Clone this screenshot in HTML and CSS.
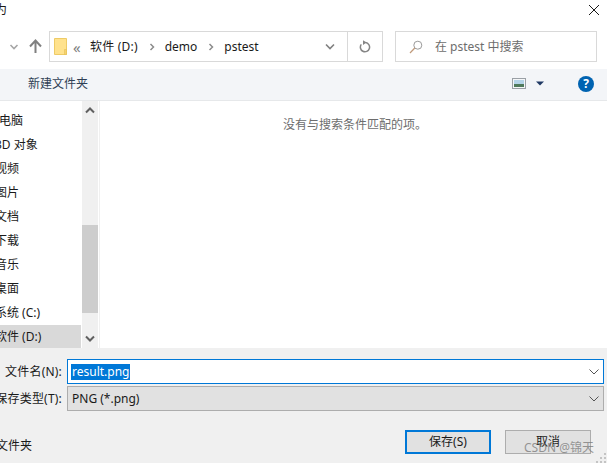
FILE: index.html
```html
<!DOCTYPE html>
<html lang="zh">
<head>
<meta charset="utf-8">
<title>另存为</title>
<link rel="stylesheet" href="styles.css">
</head>
<body>
<div class="dialog">
  <header class="titlebar">
    <span class="title">另存为</span>
    <svg class="close" width="12" height="12" viewBox="0 0 12 12"><path d="M1 1 L11 11 M11 1 L1 11" stroke="#1a1a1a" stroke-width="1" fill="none"/></svg>
  </header>
  <div class="navbar">
    <svg class="back" width="10" height="8" viewBox="0 0 10 8"><path d="M1.5 2 L5 5.5 L8.5 2" stroke="#a6a6a6" stroke-width="1.6" fill="none"/></svg>
    <svg class="up" width="13" height="14" viewBox="0 0 13 14"><path d="M6.5 14 V2 M1 7.5 L6.5 1.5 L12 7.5" stroke="#808080" stroke-width="2" fill="none"/></svg>
    <div class="address">
      <svg class="folder" width="13" height="17" viewBox="0 0 13 17"><path d="M.5 .5 H12.5 V16.5 H.5 Z" fill="#ffe28d" stroke="#eecb66"/><path d="M10.5 11.5 H12.5 V16.5 H10.5 Z" fill="#f5d36f" stroke="#e6bf55" stroke-width=".6"/></svg>
      <span class="crumb-more">«</span>
      <span class="crumb crumb-first">软件 (D:)</span>
      <svg class="sep" width="6" height="8" viewBox="0 0 6 8"><path d="M1.5 1 L4.5 4 L1.5 7" stroke="#8c8c8c" stroke-width="1.5" fill="none"/></svg>
      <span class="crumb">demo</span>
      <svg class="sep" width="6" height="8" viewBox="0 0 6 8"><path d="M1.5 1 L4.5 4 L1.5 7" stroke="#8c8c8c" stroke-width="1.5" fill="none"/></svg>
      <span class="crumb">pstest</span>
      <svg class="addr-drop" width="10" height="7" viewBox="0 0 10 7"><path d="M1 1.5 L5 5.5 L9 1.5" stroke="#808080" stroke-width="1.6" fill="none"/></svg>
      <div class="refresh">
        <svg width="12" height="13" viewBox="0 0 12 13"><path d="M6.5 2.6 A4.6 4.6 0 1 1 2.3 4.4" stroke="#858585" stroke-width="1.5" fill="none"/><path d="M4 .3 L7.5 2.6 L4 4.9 Z" fill="#858585"/></svg>
      </div>
    </div>
    <div class="search">
      <svg class="lens" width="14" height="14" viewBox="0 0 14 14"><circle cx="8.8" cy="5.2" r="4" stroke="#9a9a9a" fill="none"/><path d="M5.8 8 L1 13" stroke="#c09a7a" stroke-width="1.2"/></svg>
      <span>在 pstest 中搜索</span>
    </div>
  </div>
  <div class="toolbar">
    <span class="new-folder">新建文件夹</span>
    <svg class="view" width="14" height="11" viewBox="0 0 14 11"><rect x=".5" y=".5" width="13" height="10" fill="#f4f6f8" stroke="#9aa0a6"/><rect x="2" y="2" width="10" height="4" fill="#b4d4e8"/><rect x="2" y="6" width="10" height="3" fill="#4f7a5c"/></svg>
    <svg class="view-drop" width="8" height="5" viewBox="0 0 8 5"><path d="M0 .5 H8 L4 4.5 Z" fill="#1f3864"/></svg>
    <span class="help">?</span>
  </div>
  <main class="browser">
    <nav class="tree">
      <ul class="tree-list">
        <li class="tree-item root"><span>此电脑</span></li>
        <li class="tree-item"><span>3D 对象</span></li>
        <li class="tree-item"><span>视频</span></li>
        <li class="tree-item"><span>图片</span></li>
        <li class="tree-item"><span>文档</span></li>
        <li class="tree-item"><span>下载</span></li>
        <li class="tree-item"><span>音乐</span></li>
        <li class="tree-item"><span>桌面</span></li>
        <li class="tree-item"><span>系统 (C:)</span></li>
        <li class="tree-item selected"><span>软件 (D:)</span></li>
      </ul>
      <div class="scrollbar">
        <svg class="arrow" width="10" height="7" viewBox="0 0 10 7"><path d="M1 5.5 L5 1.5 L9 5.5" stroke="#606060" stroke-width="2" fill="none"/></svg>
        <div class="track"><div class="thumb"></div></div>
        <svg class="arrow" width="10" height="7" viewBox="0 0 10 7"><path d="M1 1.5 L5 5.5 L9 1.5" stroke="#606060" stroke-width="2" fill="none"/></svg>
      </div>
    </nav>
    <section class="results">没有与搜索条件匹配的项。</section>
  </main>
  <form class="form">
    <div class="row">
      <label class="label">文件名(N):</label>
      <div class="input">
        <span class="selected-text">result.png</span>
        <svg class="drop" width="10" height="6" viewBox="0 0 10 6"><path d="M.5 .5 L5 5 L9.5 .5" stroke="#555" fill="none"/></svg>
      </div>
    </div>
    <div class="row">
      <label class="label">保存类型(T):</label>
      <div class="combo">
        <span>PNG (*.png)</span>
        <svg class="drop" width="10" height="6" viewBox="0 0 10 6"><path d="M.5 .5 L5 5 L9.5 .5" stroke="#555" fill="none"/></svg>
      </div>
    </div>
    <div class="actions">
      <span class="hide-folders">隐藏文件夹</span>
      <button type="button" class="btn primary">保存(S)</button>
      <button type="button" class="btn">取消</button>
    </div>
    <span class="watermark">CSDN @锦天</span>
    <svg class="grip" width="11" height="11" viewBox="0 0 11 11"><path d="M8 1h2v2H8zM4 5h2v2H4zM8 5h2v2H8zM0 9h2v2H0zM4 9h2v2H4zM8 9h2v2H8z" fill="#c4c4c4"/></svg>
  </form>
</div>
</body>
</html>
```

FILE: styles.css
```css
* { box-sizing: border-box; }
html, body { margin: 0; padding: 0; }
body {
  width: 607px;
  height: 463px;
  overflow: hidden;
  background: #fff;
  font-family: "Noto Sans", "Noto Sans CJK SC", sans-serif;
  font-size: 12px;
  line-height: 16px;
  color: #1a1a1a;
}
.dialog { position: relative; width: 607px; height: 463px; display: flex; flex-direction: column; overflow: hidden; }

.titlebar { height: 31px; display: flex; justify-content: space-between; align-items: flex-start; flex: none; }
.title { margin-left: -29px; margin-top: 2px; }
.close { margin: 4px 7px 0 0; }

.navbar { height: 38px; flex: none; display: flex; align-items: flex-start; }
.back { margin: 12px 0 0 9px; }
.up { margin: 8px 0 0 10px; }
.address {
  margin-left: 7px;
  width: 334px;
  height: 31px;
  border: 1px solid #d9d9d9;
  display: flex;
  align-items: center;
  padding-left: 4px;
}
.folder { flex: none; }
.crumb-more { margin-left: 6px; width: 16px; color: #808080; font-size: 15px; }
.crumb-first { margin-left: 1px; letter-spacing: .2px; }
.crumb { white-space: nowrap; }
.sep { margin: 0 10px 0 11px; flex: none; }
.addr-drop { margin-left: auto; margin-right: 6px; }
.refresh {
  width: 35px;
  height: 29px;
  border-left: 1px solid #d9d9d9;
  display: flex;
  align-items: center;
  justify-content: center;
  margin-left: 6px;
}
.search {
  margin-left: 12px;
  width: 202px;
  height: 31px;
  border: 1px solid #d9d9d9;
  display: flex;
  align-items: center;
  color: #6d6d6d;
  padding-left: 13px;
}
.lens { margin-right: 12px; flex: none; }

.toolbar {
  height: 32px;
  flex: none;
  background: #f3f5f8;
  border-bottom: 1px solid #e6e8ea;
  display: flex;
  align-items: center;
  padding: 0 13px 2px 28px;
  color: #2f3f55;
}
.view { margin-left: auto; }
.view-drop { margin-left: 10px; }
.help {
  margin-left: 34px;
  width: 16px;
  height: 16px;
  border-radius: 50%;
  background: #0063b1;
  color: #fff;
  font-weight: 700;
  font-size: 12px;
  line-height: 16px;
  text-align: center;
}

.browser { height: 247px; flex: none; display: flex; background: #fff; }
.tree { width: 100px; flex: none; display: flex; background: #fff; border-right: 1px solid #f0f0f0; }
.tree-list { list-style: none; margin: 0; padding: 8px 0 0; width: 82px; flex: none; overflow: hidden; }
.tree-item { height: 24px; width: 81px; display: flex; align-items: center; white-space: nowrap; overflow: hidden; }
.tree-item span { margin-left: -5px; }
.tree-item.root span { margin-left: -13px; }
.tree-item.selected { background: #d9d9d9; }
.scrollbar { width: 16px; flex: none; background: #f0f0f0; display: flex; flex-direction: column; align-items: center; }
.arrow { flex: none; margin: 6px 0; }
.track { flex: 1; width: 100%; padding-top: 105px; padding-bottom: 16px; }
.thumb { height: 100%; background: #cdcdcd; }
.results { flex: 1; text-align: center; padding-top: 16px; color: #6d6d6d; padding-left: 3px; }

.form { flex: 1; background: #f0f0f0; display: flex; flex-direction: column; padding-top: 11px; position: relative; }
.row { display: flex; align-items: center; height: 25px; margin-bottom: 2px; }
.label { width: 62px; flex: none; display: flex; justify-content: flex-end; white-space: nowrap; overflow: hidden; margin-right: 5px; letter-spacing: .2px; }
.input, .combo {
  width: 537px;
  height: 25px;
  display: flex;
  align-items: center;
  padding-left: 3px;
  padding-right: 4px;
}
.input { background: #fff; border: 1px solid #0078d7; }
.combo { background: #e1e1e1; border: 1px solid #adadad; padding-left: 4px; }
.selected-text { background: #0078d7; color: #fff; padding: 0 1px; }
.drop { margin-left: auto; }
.actions { display: flex; align-items: center; height: 24px; margin-top: 17px; }
.hide-folders { margin-left: -28px; margin-right: auto; padding-top: 8px; }
.btn {
  font: inherit;
  color: #1a1a1a;
  width: 86px;
  height: 24px;
  background: #e1e1e1;
  border: 1px solid #adadad;
  padding: 0;
  margin-right: 16px;
}
.btn.primary { border: 2px solid #0078d7; margin-right: 14px; }
.watermark { position: absolute; left: 524px; top: 92px; font-size: 12px; color: rgba(120,120,120,.75); white-space: nowrap; }
.grip { position: absolute; right: 0; bottom: 0; }
```
